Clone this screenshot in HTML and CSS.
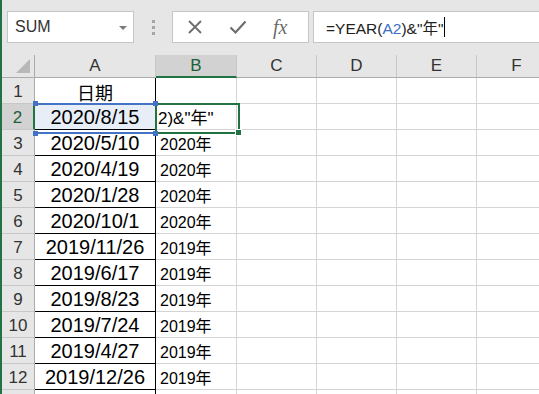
FILE: index.html
```html
<!DOCTYPE html>
<html>
<head>
    <title>Excel</title>
    <link rel="stylesheet" href="styles.css">
</head>
<body>
    <div class="ventana">
        <div class="barra-formula">
            <div class="cuadro-nombre">
                <span>SUM</span>
                <span class="flecha"></span>
            </div>
            <div class="puntos"><i></i><i></i><i></i></div>
            <div class="botones">
                <svg width="16" height="16" viewBox="0 0 16 16"><path d="M2 2L14 14M14 2L2 14" stroke="#6d6d6d" stroke-width="1.8" fill="none"/></svg>
                <svg width="18" height="16" viewBox="0 0 18 16"><path d="M1.5 8.5L6.5 13.5L16.5 2.5" stroke="#6d6d6d" stroke-width="2.2" fill="none"/></svg>
                <span class="fx">fx</span>
            </div>
            <div class="entrada">
                <span>=YEAR(<span class="ref">A2</span>)&amp;"年"</span><span class="cursor"></span>
            </div>
        </div>

        <div class="hoja">
            <div class="cabecera esquina"><span class="triangulo"></span></div>
            <div class="cabecera">A</div>
            <div class="cabecera activa-col">B</div>
            <div class="cabecera">C</div>
            <div class="cabecera">D</div>
            <div class="cabecera">E</div>
            <div class="cabecera">F</div>

            <div class="num">1</div>
            <div class="celda fecha titulo">日期</div>
            <div class="celda"></div><div class="celda"></div><div class="celda"></div><div class="celda"></div><div class="celda"></div>

            <div class="num activa-fila">2</div>
            <div class="celda fecha ref-rango">2020/8/15</div>
            <div class="celda editando">2)&amp;"年"</div><div class="celda"></div><div class="celda"></div><div class="celda"></div><div class="celda"></div>

            <div class="num">3</div>
            <div class="celda fecha">2020/5/10</div>
            <div class="celda anio">2020年</div><div class="celda"></div><div class="celda"></div><div class="celda"></div><div class="celda"></div>

            <div class="num">4</div>
            <div class="celda fecha">2020/4/19</div>
            <div class="celda anio">2020年</div><div class="celda"></div><div class="celda"></div><div class="celda"></div><div class="celda"></div>

            <div class="num">5</div>
            <div class="celda fecha">2020/1/28</div>
            <div class="celda anio">2020年</div><div class="celda"></div><div class="celda"></div><div class="celda"></div><div class="celda"></div>

            <div class="num">6</div>
            <div class="celda fecha">2020/10/1</div>
            <div class="celda anio">2020年</div><div class="celda"></div><div class="celda"></div><div class="celda"></div><div class="celda"></div>

            <div class="num">7</div>
            <div class="celda fecha">2019/11/26</div>
            <div class="celda anio">2019年</div><div class="celda"></div><div class="celda"></div><div class="celda"></div><div class="celda"></div>

            <div class="num">8</div>
            <div class="celda fecha">2019/6/17</div>
            <div class="celda anio">2019年</div><div class="celda"></div><div class="celda"></div><div class="celda"></div><div class="celda"></div>

            <div class="num">9</div>
            <div class="celda fecha">2019/8/23</div>
            <div class="celda anio">2019年</div><div class="celda"></div><div class="celda"></div><div class="celda"></div><div class="celda"></div>

            <div class="num">10</div>
            <div class="celda fecha">2019/7/24</div>
            <div class="celda anio">2019年</div><div class="celda"></div><div class="celda"></div><div class="celda"></div><div class="celda"></div>

            <div class="num">11</div>
            <div class="celda fecha">2019/4/27</div>
            <div class="celda anio">2019年</div><div class="celda"></div><div class="celda"></div><div class="celda"></div><div class="celda"></div>

            <div class="num">12</div>
            <div class="celda fecha">2019/12/26</div>
            <div class="celda anio">2019年</div><div class="celda"></div><div class="celda"></div><div class="celda"></div><div class="celda"></div>

            <div class="num"></div>
            <div class="celda fecha"></div>
            <div class="celda"></div><div class="celda"></div><div class="celda"></div><div class="celda"></div><div class="celda"></div>

            <div class="seleccion"><span class="asa"></span></div>
            <div class="rango-azul">
                <span class="asa-azul a1"></span><span class="asa-azul a2"></span>
                <span class="asa-azul a3"></span><span class="asa-azul a4"></span>
            </div>
        </div>
    </div>
</body>
</html>
```

FILE: styles.css
```css
body {
    margin: 0;
    overflow: hidden;
    font-family: "Liberation Sans", "Noto Sans CJK SC", sans-serif;
    background-color: #ffffff;
}

.ventana {
    border-left: 2px solid #217346;
    height: 394px;
    overflow: hidden;
}

.barra-formula {
    height: 55px;
    background-color: #e6e6e6;
    display: flex;
    align-items: flex-start;
    padding: 11px 0 0 5px;
    box-sizing: border-box;
}

.cuadro-nombre {
    width: 127px;
    height: 32px;
    box-sizing: border-box;
    background-color: #ffffff;
    border: 1px solid #c6c6c6;
    display: flex;
    align-items: center;
    justify-content: space-between;
    padding: 0 6px 0 7px;
    font-size: 16px;
    color: #333333;
}

.flecha {
    width: 0;
    height: 0;
    border-left: 4px solid transparent;
    border-right: 4px solid transparent;
    border-top: 4px solid #7a7a7a;
    margin-top: 1px;
}

.puntos {
    width: 38px;
    display: flex;
    flex-direction: column;
    align-items: center;
    gap: 3px;
    padding-top: 9px;
}

.puntos i {
    display: block;
    width: 3px;
    height: 3px;
    background-color: #a6a6a6;
}

.botones {
    width: 137px;
    height: 32px;
    box-sizing: border-box;
    background-color: #ffffff;
    border: 1px solid #c6c6c6;
    display: flex;
    align-items: center;
    padding-left: 14px;
    gap: 26px;
}

.fx {
    font-family: "Liberation Serif", "DejaVu Serif", serif;
    font-style: italic;
    font-size: 20px;
    color: #6d6d6d;
}

.entrada {
    flex: 1;
    height: 32px;
    box-sizing: border-box;
    margin-left: 4px;
    background-color: #ffffff;
    border: 1px solid #c6c6c6;
    border-right: none;
    display: flex;
    align-items: center;
    padding-left: 12px;
    font-size: 15.5px;
    color: #222222;
}

.ref {
    color: #3b6fc7;
}

.cursor {
    display: inline-block;
    width: 1px;
    height: 20px;
    background-color: #000000;
    margin-left: 1px;
}

.hoja {
    position: relative;
    display: grid;
    grid-template-columns: 33px 121px 81px 80px 80px 80px 80px;
    grid-template-rows: 23px repeat(13, 26px);
    font-size: 16px;
}

.cabecera {
    background-color: #e6e6e6;
    border-right: 1px solid #c8c8c8;
    border-bottom: 1px solid #ababab;
    display: flex;
    align-items: center;
    justify-content: center;
    font-size: 17px;
    color: #333333;
    box-sizing: border-box;
}

.esquina {
    position: relative;
    border-right: 1px solid #ababab;
}

.triangulo {
    position: absolute;
    right: 4px;
    bottom: 4px;
    width: 0;
    height: 0;
    border-left: 14px solid transparent;
    border-bottom: 14px solid #b8b8b8;
}

.activa-col {
    background-color: #d2d2d2;
    color: #1e5e3a;
    border-bottom: 2px solid #217346;
}

.num {
    background-color: #e6e6e6;
    border-right: 1px solid #ababab;
    border-bottom: 1px solid #c8c8c8;
    display: flex;
    align-items: center;
    justify-content: center;
    font-size: 17px;
    color: #333333;
    box-sizing: border-box;
    padding-top: 2px;
}

.activa-fila {
    background-color: #d2d2d2;
    color: #1e5e3a;
    border-right: 2px solid #217346;
}

.celda {
    border-right: 1px solid #d4d4d4;
    border-bottom: 1px solid #d4d4d4;
    box-sizing: border-box;
    display: flex;
    align-items: center;
    white-space: nowrap;
    overflow: hidden;
}

.fecha {
    border-right: 1px solid #000000;
    border-bottom: 1px solid #000000;
    justify-content: center;
    font-size: 20px;
    color: #000000;
    padding-top: 2px;
}

.titulo {
    font-size: 18px;
}

.anio {
    padding: 1px 0 0 4px;
    color: #000000;
}

.editando {
    padding: 0 0 0 2px;
    font-size: 17px;
    color: #000000;
}

.ref-rango {
    background-color: #e8eef8;
}

.seleccion {
    position: absolute;
    left: 153px;
    top: 48px;
    width: 81px;
    height: 27px;
    border: 2px solid #217346;
}

.asa {
    position: absolute;
    right: -4px;
    bottom: -4px;
    width: 5px;
    height: 5px;
    background-color: #217346;
    border: 1px solid #ffffff;
}

.rango-azul {
    position: absolute;
    left: 33px;
    top: 48px;
    width: 120px;
    height: 27px;
    border-top: 2px solid #4472c4;
    border-bottom: 2px solid #4472c4;
}

.asa-azul {
    position: absolute;
    width: 5px;
    height: 5px;
    background-color: #4472c4;
}

.a1 { left: -2px; top: -4px; }
.a2 { right: -3px; top: -4px; }
.a3 { left: -2px; bottom: -4px; }
.a4 { right: -3px; bottom: -4px; }
```
